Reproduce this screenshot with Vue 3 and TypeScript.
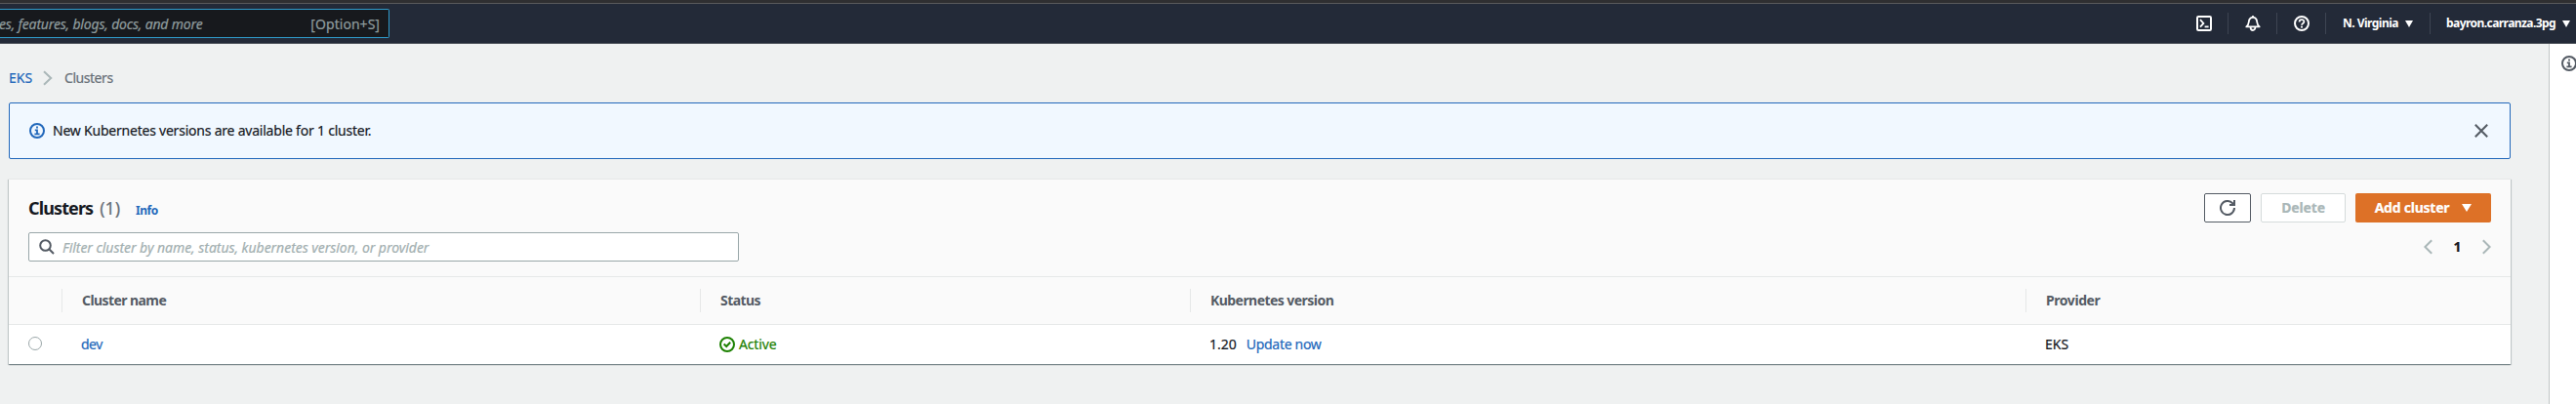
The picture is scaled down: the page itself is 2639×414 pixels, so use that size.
<script setup lang="ts">
interface Column {
  id: string
  label: string
}

interface Cluster {
  name: string
  status: string
  version: string
  provider: string
}

const columns: Column[] = [
  { id: 'name', label: 'Cluster name' },
  { id: 'status', label: 'Status' },
  { id: 'version', label: 'Kubernetes version' },
  { id: 'provider', label: 'Provider' },
]

const clusters: Cluster[] = [
  { name: 'dev', status: 'Active', version: '1.20', provider: 'EKS' },
]
</script>

<template>
  <div class="page">
    <header class="topnav">
      <div class="search">
        <span class="search-hint">es, features, blogs, docs, and more</span>
        <span class="search-key">[Option+S]</span>
      </div>
      <nav class="tools">
        <a class="tool">
          <svg width="16" height="16" viewBox="0 0 16 16" fill="none" stroke="#fff" stroke-width="2">
            <rect x="1" y="1" width="14" height="14" rx="1.2" />
            <path d="M4 4.2 7.4 7.9 4 11.6" stroke-width="1.8" />
            <path d="M8.6 11.4h4" stroke-width="1.8" />
          </svg>
        </a>
        <a class="tool">
          <svg width="16" height="16" viewBox="0 0 16 16" fill="none" stroke="#fff" stroke-width="1.8" stroke-linejoin="round">
            <path d="M8 0v2" />
            <path d="M1.3 11.4C3.3 9.7 3.6 8.6 3.8 6.5 4 3.4 5.6 1.8 8 1.8s4 1.6 4.2 4.7c.2 2.1.5 3.2 2.5 4.9z" />
            <path d="M5.6 12c0 4 4.8 4 4.8 0" />
          </svg>
        </a>
        <a class="tool">
          <svg width="16" height="16" viewBox="0 0 16 16" fill="none" stroke="#fff" stroke-width="2">
            <circle cx="8" cy="8" r="7" />
            <path d="M5.6 6.4C5.6 3.3 10.4 3.4 10.4 6.2 10.4 8 8 7.9 8 9.8" stroke-width="1.8" />
            <path d="M8 10.7v1.7" />
          </svg>
        </a>
        <a class="tool region">
          <span>N. Virginia</span>
          <svg width="8" height="7" viewBox="0 0 8 7"><path d="M0 0h8L4 7z" fill="#fff" /></svg>
        </a>
        <a class="tool account">
          <span>bayron.carranza.3pg</span>
          <svg width="8" height="7" viewBox="0 0 8 7"><path d="M0 0h8L4 7z" fill="#fff" /></svg>
        </a>
      </nav>
    </header>

    <div class="body">
      <main class="content">
        <div class="crumbs">
          <a class="link crumb-root">EKS</a>
          <svg width="10" height="16" viewBox="0 0 10 16" fill="none" stroke="#aab7b8" stroke-width="2">
            <path d="M1 1.2 8.2 8 1 14.8" />
          </svg>
          <span class="crumb-here">Clusters</span>
        </div>

        <section class="alert">
          <svg width="16" height="16" viewBox="0 0 16 16" fill="none" stroke="#2268bb" stroke-width="2">
            <circle cx="8" cy="8" r="7" />
            <path d="M8 3.5v2M5.8 7.4H8v3.7M5.4 11.4h5.2" stroke-width="1.8" />
          </svg>
          <span class="alert-text">New Kubernetes versions are available for 1 cluster.</span>
          <svg class="close" width="14" height="14" viewBox="0 0 14 14" fill="none" stroke="#545b64" stroke-width="2">
            <path d="M.8.8l12.4 12.4M13.2.8.8 13.2" />
          </svg>
        </section>

        <section class="card">
          <div class="card-head">
            <div class="bar">
              <div class="heading">
                <h2 class="title">Clusters</h2>
                <span class="count">(1)</span>
                <a class="link info">Info</a>
              </div>
              <div class="actions">
                <button class="btn refresh">
                  <svg width="16" height="16" viewBox="0 0 16 16" fill="none" stroke="#545b64" stroke-width="2">
                    <path d="M15 8A7 7 0 1 1 13.2 3.3L15 5" />
                    <path d="M15 0v5h-5" />
                  </svg>
                </button>
                <button class="btn delete">Delete</button>
                <button class="btn add">
                  <span>Add cluster</span>
                  <svg width="10" height="8" viewBox="0 0 10 8"><path d="M0 0h10L5 8z" fill="#fff" /></svg>
                </button>
              </div>
            </div>
            <div class="bar second">
              <div class="filter">
                <svg width="16" height="16" viewBox="0 0 16 16" fill="none" stroke="#545b64" stroke-width="2">
                  <circle cx="6.5" cy="6.5" r="5.3" />
                  <path d="M10.3 10.3 15 15" />
                </svg>
                <span class="placeholder">Filter cluster by name, status, kubernetes version, or provider</span>
              </div>
              <div class="pager">
                <svg width="9" height="16" viewBox="0 0 9 16" fill="none" stroke="#aab7b8" stroke-width="2">
                  <path d="M8.2 1.2 1.4 8l6.8 6.8" />
                </svg>
                <span class="page-no">1</span>
                <svg width="9" height="16" viewBox="0 0 9 16" fill="none" stroke="#aab7b8" stroke-width="2">
                  <path d="M.8 1.2 7.6 8 .8 14.8" />
                </svg>
              </div>
            </div>
          </div>

          <div class="row thead">
            <div></div>
            <div v-for="c in columns" :key="c.id" class="th" :class="c.id">{{ c.label }}</div>
          </div>
          <div v-for="k in clusters" :key="k.name" class="row trow">
            <div class="pick"><span class="radio"></span></div>
            <div class="td"><a class="link dev">{{ k.name }}</a></div>
            <div class="td status-cell">
              <svg width="16" height="16" viewBox="0 0 16 16" fill="none" stroke="#1d8102" stroke-width="2">
                <circle cx="8" cy="8" r="7" />
                <path d="M4.6 7.6 7.2 10l4-4.2" />
              </svg>
              <span class="active">{{ k.status }}</span>
            </div>
            <div class="td">
              <span class="ver">{{ k.version }}</span>
              <a class="link update">Update now</a>
            </div>
            <div class="td">{{ k.provider }}</div>
          </div>
        </section>
      </main>

      <aside class="panel">
        <svg width="16" height="16" viewBox="0 0 16 16" fill="none" stroke="#545b64" stroke-width="2">
          <circle cx="8" cy="8" r="7" />
          <path d="M8 3.5v2M5.8 7.4H8v3.7M5.4 11.4h5.2" stroke-width="1.8" />
        </svg>
      </aside>
    </div>
  </div>
</template>

<style>
body {
  margin: 0;
  overflow: hidden;
}
</style>

<style scoped>
.page {
  width: 2639px;
  height: 414px;
  display: flex;
  flex-direction: column;
  overflow: hidden;
  background: #eff1f1;
  color: #16191f;
  font: 400 14px/20px "Noto Sans", "Open Sans", sans-serif;
  white-space: nowrap;
  -webkit-text-stroke: 0.2px;
}
.page * {
  box-sizing: border-box;
}
svg {
  display: block;
  flex: none;
}
.link {
  color: #2268bb;
}

.topnav {
  height: 45px;
  flex: none;
  display: flex;
  justify-content: space-between;
  align-items: flex-start;
  padding-top: 5px;
  background: linear-gradient(#2f2f31 0 3px, #59595b 3px 4px, #232a38 4px 44px, #51565e 44px 45px);
  color: #fff;
}
.search {
  width: 399px;
  height: 30px;
  margin-top: 4px;
  padding: 1px 9px 0 0;
  display: flex;
  align-items: center;
  justify-content: space-between;
  border: 1px solid #2f9ac9;
  border-left: 0;
  border-radius: 0 2px 2px 0;
  background: #17191d;
  color: #8f9c9d;
}
.search-hint {
  font-style: italic;
  margin-left: -1px;
  letter-spacing: -0.18px;
}
.search-key {
  letter-spacing: 0.04px;
}
.tools {
  display: flex;
  padding-top: 8px;
}
.tool {
  height: 22px;
  width: 50px;
  display: flex;
  align-items: center;
  justify-content: center;
  border-right: 1px solid #3d4452;
  font-size: 12px;
  font-weight: 700;
  -webkit-text-stroke: 0;
}
.tool svg {
  margin-left: 1px;
}
.region {
  width: 107px;
  letter-spacing: -0.52px;
  justify-content: flex-start;
  padding-left: 17px;
}
.account {
  width: 149px;
  border: 0;
  letter-spacing: -0.56px;
  justify-content: flex-start;
  padding-left: 16px;
}
.region svg {
  margin-left: 7px;
}
.account svg {
  margin-left: 7px;
}

.body {
  flex: 1;
  display: flex;
  justify-content: space-between;
}
.content {
  width: 2563px;
  margin-left: 9px;
  padding-top: 25px;
}
.crumbs {
  height: 20px;
  display: flex;
  align-items: center;
}
.crumb-root {
  width: 35px;
}
.crumb-here {
  margin-left: 12px;
  color: #687078;
  letter-spacing: -0.45px;
}

.alert {
  height: 58px;
  margin-top: 15px;
  padding: 0 22px 0 20px;
  display: flex;
  align-items: center;
  border: 1px solid #2268bb;
  border-radius: 2px;
  background: #f1f8ff;
}
.alert-text {
  margin-left: 8px;
  letter-spacing: -0.22px;
}
.close {
  margin-left: auto;
}

.card {
  margin-top: 20px;
  height: 190px;
  border-top: 1px solid #e6e8e8;
  background: #fff;
  box-shadow: 0 1px 1px 0 rgba(0, 28, 36, 0.3), 1px 1px 1px 0 rgba(0, 28, 36, 0.15), -1px 1px 1px 0 rgba(0, 28, 36, 0.15);
}
.card-head {
  height: 100px;
  padding: 14px 20px 0;
  border-bottom: 1px solid #e6e8e8;
  background: #fafafa;
}
.bar {
  height: 30px;
  display: flex;
  justify-content: space-between;
  align-items: center;
}
.second {
  margin-top: 10px;
}
.heading {
  display: flex;
  align-items: baseline;
  padding-top: 2px;
  line-height: 24px;
}
.title {
  margin: 0;
  font-size: 18px;
  line-height: 24px;
  letter-spacing: -0.88px;
  -webkit-text-stroke: 0;
}
.count {
  margin-left: 7px;
  font-size: 18px;
  color: #687078;
  letter-spacing: -0.1px;
}
.info {
  margin-left: 16px;
  font-size: 12px;
  font-weight: 700;
  letter-spacing: -0.5px;
  -webkit-text-stroke: 0;
}
.actions {
  display: flex;
  gap: 10px;
}
.btn {
  height: 30px;
  padding: 0;
  display: flex;
  align-items: center;
  justify-content: center;
  border-radius: 2px;
  background: #fff;
  font: 700 14px/20px "Noto Sans", "Open Sans", sans-serif;
  -webkit-text-stroke: 0.2px;
}
.refresh {
  width: 48px;
  border: 1px solid #545b64;
}
.delete {
  width: 87px;
  border: 1px solid #d5dbdb;
  color: #aab7b8;
  letter-spacing: -0.14px;
}
.add {
  width: 139px;
  border: 0;
  background: #dd7127;
  color: #fff;
  letter-spacing: -0.23px;
}
.add svg {
  margin-left: 13px;
}
.filter {
  width: 728px;
  height: 30px;
  padding-left: 10px;
  display: flex;
  align-items: center;
  border: 1px solid #99a7a9;
  border-radius: 2px;
  background: #fff;
}
.placeholder {
  margin-left: 8px;
  padding-top: 1px;
  font-style: italic;
  color: #a3b0b1;
  letter-spacing: -0.04px;
}
.pager {
  display: flex;
  align-items: center;
}
.page-no {
  width: 51px;
  text-align: center;
  font-weight: 700;
}

.row {
  display: grid;
  grid-template-columns: 54px 654px 502px 856px 1fr;
  align-items: center;
}
.thead {
  height: 49px;
  border-bottom: 1px solid #e6e8e8;
  background: #fafafa;
}
.th {
  height: 24px;
  padding-left: 20px;
  display: flex;
  align-items: center;
  border-left: 1px solid #e6e8e8;
  color: #545b64;
  font-weight: 700;
  letter-spacing: -0.58px;
  -webkit-text-stroke: 0;
}
.th.version {
  letter-spacing: -0.55px;
}
.th.provider {
  letter-spacing: -0.43px;
}
.trow {
  height: 40px;
}
.td {
  padding-left: 20px;
  display: flex;
  align-items: center;
}
.pick {
  padding-left: 20px;
}
.radio {
  display: block;
  width: 14px;
  height: 14px;
  margin-bottom: 2px;
  border: 1px solid #9ba7a9;
  border-radius: 50%;
}
.dev {
  letter-spacing: -0.5px;
}
.active {
  margin-left: 4px;
  color: #1d8102;
  letter-spacing: -0.15px;
}
.update {
  margin-left: 10px;
  letter-spacing: -0.3px;
}

.panel {
  width: 28px;
  padding: 12px 0 0 12px;
  border-left: 1px solid #c2c6c6;
  background: #fff;
}
</style>
